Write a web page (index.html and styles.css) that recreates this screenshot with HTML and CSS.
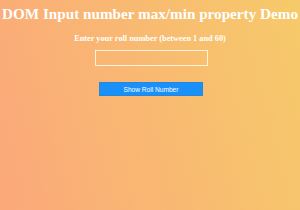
FILE: index.html
```html
<!DOCTYPE html>
<html>
<head>
<meta charset="utf-8">
<link rel="stylesheet" href="styles.css">
</head>
<body>
<main class="page">
  <h1 class="title">DOM Input number max/min property Demo</h1>
  <p class="label">Enter your roll number (between 1 and 60)</p>
  <input class="field" type="number" min="1" max="60">
  <button class="btn" type="button">Show Roll Number</button>
</main>
</body>
</html>
```
FILE: styles.css
```css
html, body {
  margin: 0;
  padding: 0;
  width: 300px;
  height: 210px;
  overflow: hidden;
}
body {
  background: linear-gradient(75deg, #fba87a 0%, #f6ca6a 100%);
  font-family: "Liberation Serif", "Times New Roman", serif;
  color: #fff;
}
.page {
  display: flex;
  flex-direction: column;
  align-items: center;
}
.title {
  margin: 4px 0 0;
  font-size: 15.2px;
  line-height: 19px;
  font-weight: bold;
  white-space: nowrap;
}
.label {
  margin: 11px 0 0;
  font-size: 8.3px;
  line-height: 10px;
  font-weight: bold;
}
.field {
  box-sizing: border-box;
  margin: 6px 0 0 2px;
  width: 113px;
  height: 16px;
  background: transparent;
  border: 1.5px solid #fff3dc;
  outline: none;
  padding: 0;
}
.btn {
  box-sizing: border-box;
  margin: 16px 0 0 2px;
  width: 104px;
  height: 14px;
  padding: 0;
  border: 1px solid #2a86d8;
  background: #1a90fa;
  color: #fff;
  font-family: "Liberation Sans", Arial, sans-serif;
  font-size: 6.6px;
}
```
